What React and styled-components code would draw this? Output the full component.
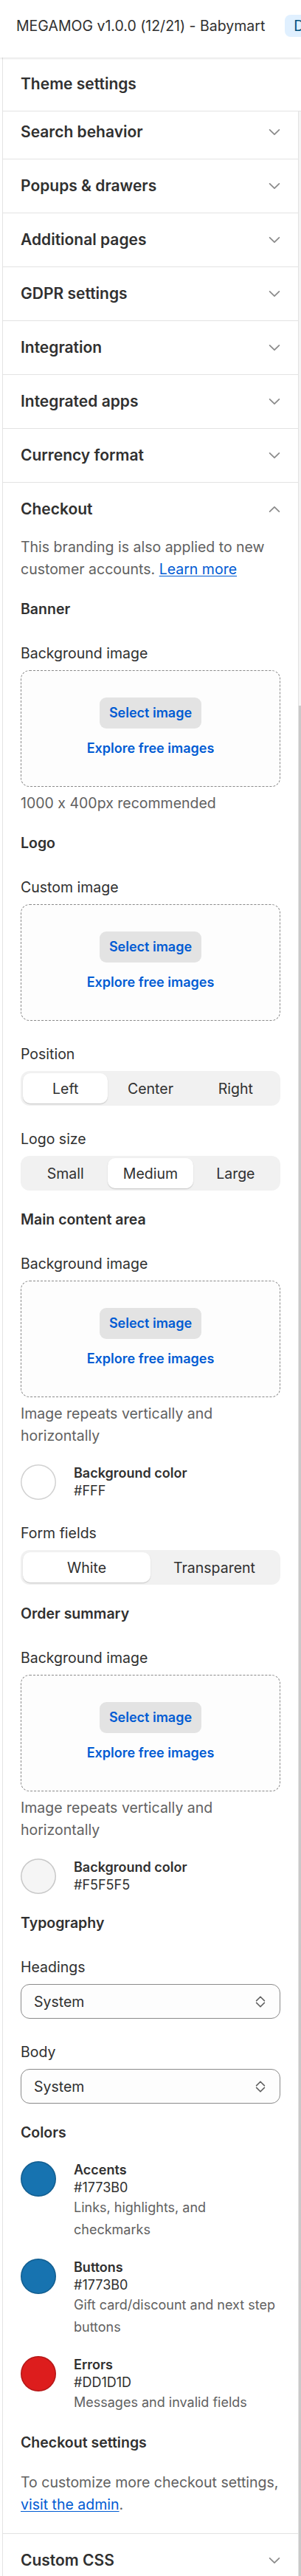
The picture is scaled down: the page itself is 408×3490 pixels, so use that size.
import React from 'react';
import styled, { createGlobalStyle } from 'styled-components';

const GlobalStyle = createGlobalStyle`
  *, *::before, *::after { box-sizing: border-box; }
  html, body { margin: 0; padding: 0; background: #ffffff; }
  body {
    font-family: Inter, "Noto Sans", "Liberation Sans", sans-serif;
    font-feature-settings: "calt" 0;
    color: #303030;
    -webkit-font-smoothing: antialiased;
  }
`;

const Page = styled.div`
  width: 408px;
  overflow: hidden;
  background: #ffffff;
`;

const TopBar = styled.header`
  position: relative;
  z-index: 1;
  height: 78px;
  display: flex;
  align-items: center;
  gap: 27px;
  padding: 0 0 8px 22px;
  white-space: nowrap;
  overflow: hidden;
  background: #ffffff;
  box-shadow: 0 1px 3px rgba(0, 0, 0, 0.14);
`;

const AppTitle = styled.span`
  flex-shrink: 0;
  font-size: 19.5px;
  line-height: 30px;
  color: #303030;
`;

const Badge = styled.span`
  flex-shrink: 0;
  height: 30px;
  display: inline-flex;
  align-items: center;
  padding: 0 12px;
  border-radius: 8px;
  background: #e0f0ff;
  color: #00527c;
  font-size: 19.5px;
`;

const Sidebar = styled.div`
  margin-left: 3px;
  border-left: 1px solid #e3e3e3;
`;

const SidebarHeader = styled.div`
  height: 73px;
  display: flex;
  align-items: center;
  padding: 0 24px;
  border-bottom: 1px solid #e3e3e3;
  font-size: 21px;
  font-weight: 600;
  line-height: 30px;
`;

const ScrollArea = styled.div`
  display: flex;
  align-items: stretch;
`;

const Settings = styled.div`
  flex: 1;
  min-width: 0;
`;

const ScrollTrack = styled.div`
  width: 4px;
  flex-shrink: 0;
  border-left: 1px solid #e3e3e3;
  background: #f4f4f4;
  padding-top: 805px;
  display: flex;
`;

const ScrollThumb = styled.div`
  flex: 1;
  background: #c9c9c9;
`;

const AccordionRow = styled.div`
  display: flex;
  align-items: center;
  justify-content: space-between;
  padding: ${(p) => (p.$clipped ? '13px' : '21px')} 24px 21px;
  border-bottom: 1px solid #e3e3e3;
`;

const RowTitle = styled.span`
  font-size: 21px;
  font-weight: 600;
  line-height: 30px;
  color: #303030;
`;

const ChevronSvg = styled.svg`
  flex-shrink: 0;
  display: block;
  transform: ${(p) => (p.$up ? 'rotate(180deg)' : 'none')};
`;

const Chevron = ({ up }) => (
  <ChevronSvg $up={up} width="16" height="10" viewBox="0 0 16 10" aria-hidden="true">
    <path
      d="M1.6 1.8 8 8.2l6.4-6.4"
      fill="none"
      stroke="#8a8a8a"
      strokeWidth="1.7"
      strokeLinecap="round"
      strokeLinejoin="round"
    />
  </ChevronSvg>
);

const Section = styled.section`
  padding: 21px 24px 24px;
  border-bottom: 1px solid #e3e3e3;
`;

const SectionHeader = styled.div`
  display: flex;
  align-items: center;
  justify-content: space-between;
`;

const SectionBody = styled.div`
  margin-top: 21px;
  display: flex;
  flex-direction: column;
  gap: 24px;
`;

const Group = styled.div`
  display: flex;
  flex-direction: column;
  gap: 24px;
`;

const SubHeading = styled.h3`
  margin: 0;
  font-size: 19.5px;
  font-weight: 600;
  line-height: 30px;
  color: #303030;
`;

const Paragraph = styled.p`
  margin: 0;
  font-size: 19.5px;
  line-height: 30px;
  color: ${(p) => (p.$subdued ? '#616161' : '#303030')};
`;

const Link = styled.a`
  color: #005bd3;
  text-decoration: underline;
  text-underline-offset: 2px;
`;

const Field = styled.div`
  padding-top: 6px;
  display: flex;
  flex-direction: column;
  gap: 8px;
`;

const Label = styled.span`
  font-size: 19.5px;
  line-height: 30px;
  color: #303030;
`;

const Help = styled.span`
  margin-top: -1px;
  font-size: 19.5px;
  line-height: 30px;
  color: #616161;
`;

const DropZone = styled.div`
  height: 158px;
  border: 1px dashed #8a8a8a;
  border-radius: 12px;
  background: #fdfdfd;
  display: flex;
  flex-direction: column;
  align-items: center;
  justify-content: center;
  gap: 12px;
`;

const SelectImageButton = styled.button`
  height: 42px;
  padding: 0 13px;
  border: none;
  border-radius: 9px;
  background: #e3e3e3;
  color: #005bd3;
  font-family: inherit;
  font-size: 18px;
  font-weight: 600;
  line-height: 30px;
`;

const ExploreLink = styled.span`
  font-size: 18px;
  font-weight: 600;
  line-height: 30px;
  color: #005bd3;
`;

const ImageField = ({ label, help }) => (
  <Field>
    <Label>{label}</Label>
    <DropZone>
      <SelectImageButton type="button">Select image</SelectImageButton>
      <ExploreLink>Explore free images</ExploreLink>
    </DropZone>
    {help && <Help>{help}</Help>}
  </Field>
);

const Segmented = styled.div`
  height: 47px;
  padding: 3px;
  border-radius: 12px;
  background: #f1f1f1;
  display: grid;
  grid-template-columns: repeat(${(p) => p.$count}, 1fr);
`;

const SegmentItem = styled.div`
  display: flex;
  align-items: center;
  justify-content: center;
  border-radius: 10px;
  font-size: 19.5px;
  line-height: 30px;
  color: #303030;
  background: ${(p) => (p.$active ? '#ffffff' : 'transparent')};
  box-shadow: ${(p) =>
    p.$active ? '0 1px 0 rgba(0,0,0,0.07), 0 1px 2px rgba(0,0,0,0.12)' : 'none'};
`;

const SegmentField = ({ label, options, active }) => (
  <Field>
    <Label>{label}</Label>
    <Segmented $count={options.length}>
      {options.map((o) => (
        <SegmentItem key={o} $active={o === active}>
          {o}
        </SegmentItem>
      ))}
    </Segmented>
  </Field>
);

const SelectBox = styled.div`
  height: 47px;
  padding: 0 19px 0 17px;
  border: 1px solid #8a8a8a;
  border-radius: 12px;
  background: #fdfdfd;
  display: flex;
  align-items: center;
  justify-content: space-between;
  font-size: 19.5px;
  line-height: 30px;
  color: #303030;
`;

const SelectIcon = () => (
  <svg width="14" height="20" viewBox="0 0 14 20" aria-hidden="true">
    <path
      d="M1.6 8.6 7 3.2l5.4 5.4M1.6 11.4 7 16.8l5.4-5.4"
      fill="none"
      stroke="#616161"
      strokeWidth="1.6"
      strokeLinecap="round"
      strokeLinejoin="round"
    />
  </svg>
);

const SelectField = ({ label, value }) => (
  <Field>
    <Label>{label}</Label>
    <SelectBox>
      <span>{value}</span>
      <SelectIcon />
    </SelectBox>
  </Field>
);

const SwatchRow = styled.div`
  display: flex;
  align-items: flex-start;
  gap: 24px;
`;

const Swatch = styled.div`
  width: 48px;
  height: 48px;
  flex-shrink: 0;
  border-radius: 50%;
  background: ${(p) => p.$color};
  box-shadow: inset 0 0 0 1.5px rgba(0, 0, 0, 0.18);
`;

const SwatchText = styled.div`
  display: flex;
  flex-direction: column;
  min-width: 0;
`;

const SwatchTitle = styled.span`
  font-size: 18px;
  font-weight: 600;
  line-height: 24px;
  color: #303030;
`;

const SwatchHex = styled.span`
  font-size: 18px;
  line-height: 24px;
  color: #303030;
`;

const SwatchDesc = styled.span`
  font-size: 18px;
  line-height: 30px;
  color: #616161;
`;

const ColorSetting = ({ color, title, hex, desc }) => (
  <SwatchRow>
    <Swatch $color={color} />
    <SwatchText>
      <SwatchTitle>{title}</SwatchTitle>
      <SwatchHex>{hex}</SwatchHex>
      {desc && <SwatchDesc>{desc}</SwatchDesc>}
    </SwatchText>
  </SwatchRow>
);

const collapsedRows = [
  'Search behavior',
  'Popups & drawers',
  'Additional pages',
  'GDPR settings',
  'Integration',
  'Integrated apps',
  'Currency format',
];

export default function App() {
  return (
    <>
      <GlobalStyle />
      <Page>
        <TopBar>
          <AppTitle>MEGAMOG v1.0.0 (12/21) - Babymart</AppTitle>
          <Badge>Draft</Badge>
        </TopBar>
        <Sidebar>
          <SidebarHeader>Theme settings</SidebarHeader>
          <ScrollArea>
            <Settings>
              {collapsedRows.map((r, i) => (
                <AccordionRow key={r} $clipped={i === 0}>
                  <RowTitle>{r}</RowTitle>
                  <Chevron />
                </AccordionRow>
              ))}

              <Section>
                <SectionHeader>
                  <RowTitle>Checkout</RowTitle>
                  <Chevron up />
                </SectionHeader>
                <SectionBody>
                  <Paragraph $subdued>
                    This branding is also applied to new customer accounts.{' '}
                    <Link href="#">Learn more</Link>
                  </Paragraph>

                  <Group>
                    <SubHeading>Banner</SubHeading>
                    <ImageField label="Background image" help="1000 x 400px recommended" />
                  </Group>

                  <Group>
                    <SubHeading>Logo</SubHeading>
                    <ImageField label="Custom image" />
                    <SegmentField label="Position" options={['Left', 'Center', 'Right']} active="Left" />
                    <SegmentField label="Logo size" options={['Small', 'Medium', 'Large']} active="Medium" />
                  </Group>

                  <Group>
                    <SubHeading>Main content area</SubHeading>
                    <ImageField
                      label="Background image"
                      help="Image repeats vertically and horizontally"
                    />
                    <ColorSetting color="#ffffff" title="Background color" hex="#FFF" />
                    <SegmentField label="Form fields" options={['White', 'Transparent']} active="White" />
                  </Group>

                  <Group>
                    <SubHeading>Order summary</SubHeading>
                    <ImageField
                      label="Background image"
                      help="Image repeats vertically and horizontally"
                    />
                    <ColorSetting color="#f5f5f5" title="Background color" hex="#F5F5F5" />
                  </Group>

                  <Group>
                    <SubHeading>Typography</SubHeading>
                    <SelectField label="Headings" value="System" />
                    <SelectField label="Body" value="System" />
                  </Group>

                  <Group>
                    <SubHeading>Colors</SubHeading>
                    <ColorSetting
                      color="#1773b0"
                      title="Accents"
                      hex="#1773B0"
                      desc="Links, highlights, and checkmarks"
                    />
                    <ColorSetting
                      color="#1773b0"
                      title="Buttons"
                      hex="#1773B0"
                      desc="Gift card/discount and next step buttons"
                    />
                    <ColorSetting
                      color="#dd1d1d"
                      title="Errors"
                      hex="#DD1D1D"
                      desc="Messages and invalid fields"
                    />
                  </Group>

                  <Group>
                    <SubHeading>Checkout settings</SubHeading>
                    <Paragraph $subdued>
                      To customize more checkout settings, <Link href="#">visit the admin</Link>.
                    </Paragraph>
                  </Group>
                </SectionBody>
              </Section>

              <AccordionRow>
                <RowTitle>Custom CSS</RowTitle>
                <Chevron />
              </AccordionRow>
            </Settings>
            <ScrollTrack>
              <ScrollThumb />
            </ScrollTrack>
          </ScrollArea>
        </Sidebar>
      </Page>
    </>
  );
}
